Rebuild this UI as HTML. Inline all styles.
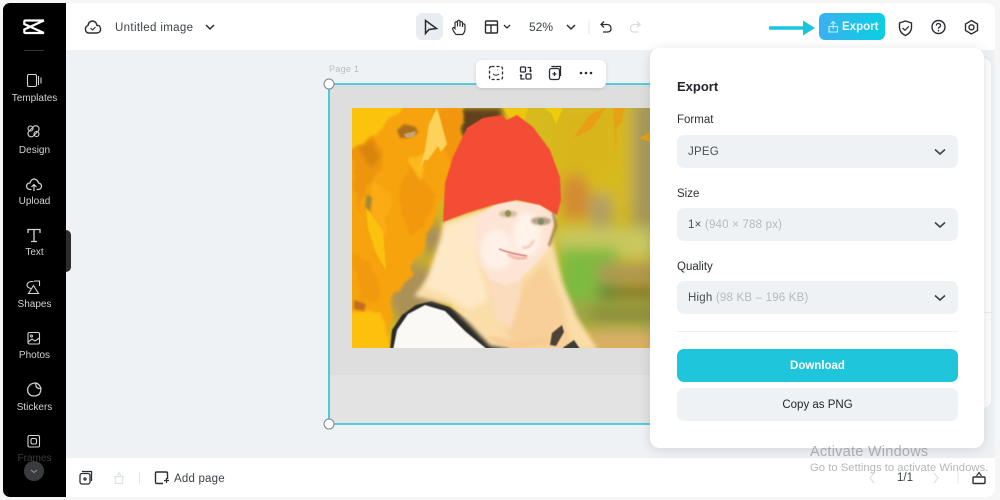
<!DOCTYPE html>
<html><head><meta charset="utf-8"><style>
*{box-sizing:border-box;margin:0;padding:0}
html,body{width:1000px;height:500px;overflow:hidden;background:#f6f6f6;font-family:"Liberation Sans",sans-serif}
.a{position:absolute}
svg{position:absolute;overflow:visible}
.t{position:absolute;white-space:nowrap}
.nav{position:absolute;left:3px;width:63px;text-align:center;color:#d2d2d2;font-size:10px}
.lb{position:absolute;left:677px;font-size:11.5px;color:#2b2f36}
.sel{position:absolute;left:677px;width:281px;height:33px;background:#eff2f5;border-radius:7px;font-size:11.5px;line-height:35px;padding-left:11px;color:#4a4f57;letter-spacing:.2px}
.sel i{font-style:normal;color:#b4b9c0}
.sel svg{left:257px;top:13px}
</style></head><body>

<div class="a" style="left:66px;top:3px;width:929px;height:494px;background:#eff2f5;border-radius:0 8px 8px 0"></div>
<div class="a" style="left:66px;top:3px;width:929px;height:47px;background:#fff;border-radius:0 8px 0 0"></div>
<div class="a" style="left:66px;top:458px;width:929px;height:39px;background:#fff;border-radius:0 0 8px 0"></div>

<!-- page -->
<div class="t" style="left:329px;top:64px;font-size:9px;color:#b9bdc3;letter-spacing:.3px">Page 1</div>
<svg class="a" style="left:0;top:0" width="1000" height="500" viewBox="0 0 1000 500">
<defs>
<filter id="b3" x="-30%" y="-30%" width="160%" height="160%"><feGaussianBlur stdDeviation="3"/></filter>
<filter id="b2" x="-30%" y="-30%" width="160%" height="160%"><feGaussianBlur stdDeviation="2"/></filter>
<filter id="b7" x="-30%" y="-30%" width="160%" height="160%"><feGaussianBlur stdDeviation="7"/></filter>
<filter id="b1" x="-30%" y="-30%" width="160%" height="160%"><feGaussianBlur stdDeviation="1"/></filter>
<filter id="b05" x="-30%" y="-30%" width="160%" height="160%"><feGaussianBlur stdDeviation=".6"/></filter>
<filter id="leaf" x="-10%" y="-10%" width="120%" height="120%"><feTurbulence type="fractalNoise" baseFrequency=".07" numOctaves="3" seed="4"/><feDisplacementMap in="SourceGraphic" scale="11"/><feGaussianBlur stdDeviation="1.200"/></filter>
<clipPath id="ph"><rect x="352" y="108" width="300" height="240"/></clipPath>
</defs>
<rect x="329" y="84" width="325" height="340" fill="#e3e3e3"/>
<rect x="330" y="85" width="324" height="290" fill="#dedede"/>
<g clip-path="url(#ph)">
<rect x="352" y="108" width="300" height="240" fill="#d3b71f"/>
<g filter="url(#b7)">
<rect x="505" y="100" width="155" height="110" fill="#d7ba1c"/>
<rect x="556" y="108" width="60" height="60" fill="#d9b51f"/>
<rect x="632" y="100" width="25" height="130" fill="#a79a5c"/>
<ellipse cx="575" cy="197" rx="15" ry="24" fill="#d28a30"/>
<rect x="590" y="195" width="22" height="45" fill="#ae9f66"/>
<rect x="555" y="228" width="105" height="30" fill="#c9c860"/>
<rect x="558" y="248" width="60" height="55" fill="#7dbb41"/>
<rect x="558" y="300" width="100" height="30" fill="#9fa845"/>
<rect x="598" y="263" width="60" height="20" fill="#ae9652"/>
<rect x="598" y="288" width="60" height="9" fill="#5a5125"/>
<rect x="590" y="310" width="70" height="8" fill="#7c7033"/>
<rect x="585" y="332" width="75" height="20" fill="#dcae6e"/>
<ellipse cx="415" cy="295" rx="28" ry="32" fill="#ab9059"/>
<ellipse cx="432" cy="238" rx="12" ry="18" fill="#a58b5d"/>
</g>
<rect x="460" y="108" width="42" height="30" fill="#5f431b" filter="url(#b3)"/>
<g filter="url(#leaf)">
<path d="M345 100H462L463 160L445 190L435 222L418 252L408 282L392 300L388 322L392 355H345Z" fill="#f7a307"/>
<path d="M345 100H412L378 130L358 150L345 165Z" fill="#fcc30f"/>
<path d="M345 312L380 312L394 355H345Z" fill="#fdc00e"/>
<path d="M352 152L372 135L382 150L381 172L366 187L358 212Z" fill="#ee950c"/>
<path d="M398 190L412 165L436 195L426 222L410 238L402 215Z" fill="#f1980a"/>
<path d="M432 108H462V170L448 160Z" fill="#f29610"/>
<path d="M352 252L370 262L380 295L362 305Z" fill="#f29a0c"/>
<path d="M372 180L392 195L385 240L372 226Z" fill="#fbab12"/>
<path d="M408 160L428 150L420 180Z" fill="#fcb81b"/>
</g>
<path d="M419 172L425 150L429 124L437 108L440 118L447 144L441 152L438 146L428 160L424 160Z" fill="#fcd25a" filter="url(#b05)"/>
<path d="M366 207L383 231L386 270L376 253L368 228Z" fill="#fbc20f" filter="url(#b05)"/>
<path d="M397 130L404 124L416 127L418 133L408 138L400 138Z" fill="#ad6e1e" filter="url(#b1)"/>
<path d="M404 134L416 131L414 137L406 138Z" fill="#c7a574" filter="url(#b05)"/>
<path d="M358 148L372 140L380 158L371 168Z" fill="#d98410" filter="url(#b2)"/>
<path d="M367 194L372 198L370 212L365 206Z" fill="#a08a30" filter="url(#b1)"/>
<path d="M354 300L366 304L364 311L354 309Z" fill="#c06e1a" filter="url(#b1)"/>
<path d="M503 108H528L524 122L518 126L510 118Z" fill="#efc50f" filter="url(#b05)"/>
<path d="M544 108H563L556 124L552 114Z" fill="#efcb0e" filter="url(#b05)"/>
<path d="M573 138L590 115L604 108H606L596 122L590 130Z" fill="#e89e13" filter="url(#b05)"/>
<path d="M613 108H625L622 122L617 128L616 152Z" fill="#e6a212" filter="url(#b05)"/>
<path d="M640 138L650 132V142Z" fill="#e9a114"/>
<!-- shirt -->
<path d="M391 350L394 330L405 313L425 304L445 307L470 325L494 350Z" fill="#fbf9f5"/>
<path d="M390 350L392 330L402 315L416 305L432 301L450 307L470 320L492 336L514 350H488L466 332L445 311L425 305L408 314L397 330L393 350Z" fill="#2c2925" filter="url(#b05)"/>
<!-- hair -->
<path d="M443 222L500 204L553 220L553 243L563 283L577 317L598 350H518L490 346L470 325L450 305L414 296L430 275L442 240Z" fill="#fadda8" filter="url(#b2)"/>
<path d="M445 226L482 212L478 260L488 300L470 310L445 295L425 288Z" fill="#fee9c6" filter="url(#b3)"/>
<path d="M522 285L545 262L562 302L572 348H512L505 325Z" fill="#f8cf98" filter="url(#b3)"/>
<path d="M490 338L515 346L548 340" stroke="#f5c88e" stroke-width="5" fill="none" filter="url(#b2)"/>
<path d="M552 333L562 325L564 332L556 346L550 345Z" fill="#4b4238" filter="url(#b05)"/>
<path d="M564 347L574 340L580 349H562Z" fill="#3c3a33" filter="url(#b05)"/>
<!-- neck & face -->
<path d="M487 272H522L520 300L510 330L495 318L490 295Z" fill="#fbdcbc" filter="url(#b2)"/>
<path d="M478 215L505 199L540 204L556 215L552 232L548 250L532 268L518 281L505 285L490 280L480 265L476 240Z" fill="#fde4d4" filter="url(#b1)"/>
<ellipse cx="527" cy="235" rx="14" ry="22" fill="#fff3ea" filter="url(#b3)"/>
<ellipse cx="497" cy="250" rx="16" ry="20" fill="#fff1e8" filter="url(#b3)"/>
<path d="M534 240Q529 250 522 247" stroke="#eec0a8" stroke-width="2" fill="none" filter="url(#b1)"/>
<ellipse cx="508" cy="214" rx="9" ry="3.500" fill="#d5bda2" filter="url(#b1)"/>
<ellipse cx="541" cy="221" rx="10" ry="4" fill="#b8a285" filter="url(#b1)"/>
<circle cx="508" cy="213.500" r="3.200" fill="#8e9250" filter="url(#b05)"/>
<circle cx="541" cy="221.500" r="3.200" fill="#7f8c68" filter="url(#b05)"/>
<path d="M499 249Q512 254 527 256" stroke="#c85d55" stroke-width="1.200" fill="none" filter="url(#b05)"/>
<path d="M508 254Q518 261 527 257" stroke="#f2b0a4" stroke-width="2.800" fill="none" filter="url(#b1)"/>
<path d="M553 212L556 226L549 246" stroke="#a1814f" stroke-width="2.500" fill="none" filter="url(#b1)"/>
<!-- hat -->
<path d="M443 222L445 183L453 157L467 128L483 118L502 115L507 120L517 115L533 127L550 150L560 177L561 200L557 215L540 205L517 200L493 205L467 213Z" fill="#f34e35" filter="url(#b05)"/>
</g>
<!-- selection -->
<path d="M329 84H654M329 84V424M329 424H654" stroke="#22c4d4" stroke-width="1.600" fill="none"/>
<circle cx="329" cy="84" r="5" fill="#fff" stroke="#7e8590" stroke-width="1"/>
<circle cx="329" cy="424" r="5" fill="#fff" stroke="#7e8590" stroke-width="1"/>
</svg>

<!-- floating toolbar -->
<div class="a" style="left:476px;top:60px;width:130px;height:28px;background:#fff;border-radius:6px;box-shadow:0 1px 4px rgba(0,0,0,.12)"></div>
<svg style="left:0;top:0" width="1000" height="500" fill="none" stroke="#2a2d33" stroke-width="1.300">
<rect x="489.500" y="66.500" width="13" height="13" rx="2" stroke-dasharray="3 2"/>
<path d="M493 74Q496 76.500 499 74M497 70H497.500" stroke-width="1"/>
<rect x="520.500" y="67" width="5" height="5" rx="1"/><rect x="526" y="74" width="5" height="5" rx="1"/>
<path d="M527.500 67.500H530.500V71.500M529.500 70.500L530.500 71.500L531.500 70.500M524.500 79H521V75M520 76L521 75L522 76"/>
<rect x="549.500" y="68.500" width="10" height="11" rx="2"/><path d="M552 67V66.500H560.500V76M552.500 74H556.500M554.500 72V76"/>
<circle cx="581" cy="73" r="1.300" fill="#2a2d33" stroke="none"/><circle cx="586" cy="73" r="1.300" fill="#2a2d33" stroke="none"/><circle cx="591" cy="73" r="1.300" fill="#2a2d33" stroke="none"/>
</svg>

<!-- second panel behind -->
<div class="a" style="left:975px;top:58px;width:16px;height:350px;background:#fff;border-radius:0 8px 8px 0;box-shadow:0 0 3px rgba(0,0,0,.06)"></div>
<div class="a" style="left:984px;top:312px;width:7px;height:1px;background:#eceef0"></div>

<!-- panel -->
<div class="a" style="left:650px;top:48px;width:334px;height:400px;background:#fff;border-radius:10px;box-shadow:0 2px 12px rgba(30,40,60,.14)"></div>
<div class="t" style="left:677px;top:79px;font-size:13px;font-weight:bold;color:#23262b">Export</div>
<div class="lb" style="top:114px">Format</div>
<div class="sel" style="top:135px">JPEG<svg width="12" height="8" fill="none" stroke="#41464e" stroke-width="1.700"><path d="M1 1.500L6 6L11 1.500"/></svg></div>
<div class="lb" style="top:188px">Size</div>
<div class="sel" style="top:208px">1× <i>(940 × 788 px)</i><svg width="12" height="8" fill="none" stroke="#41464e" stroke-width="1.700"><path d="M1 1.500L6 6L11 1.500"/></svg></div>
<div class="lb" style="top:261px">Quality</div>
<div class="sel" style="top:281px">High <i>(98 KB – 196 KB)</i><svg width="12" height="8" fill="none" stroke="#41464e" stroke-width="1.700"><path d="M1 1.500L6 6L11 1.500"/></svg></div>
<div class="a" style="left:677px;top:331px;width:281px;height:1px;background:#eceef0"></div>
<div class="a" style="left:677px;top:349px;width:281px;height:33px;background:#1fc5da;border-radius:7px;color:#fff;font-size:11.5px;font-weight:bold;text-align:center;line-height:33px;padding-top:1px">Download</div>
<div class="a" style="left:677px;top:388px;width:281px;height:33px;background:#eff2f5;border-radius:7px;color:#23262b;font-size:11.5px;text-align:center;line-height:33px;padding-top:1px">Copy as PNG</div>

<!-- sidebar -->
<div class="a" style="left:3px;top:3px;width:63px;height:494px;background:#000;border-radius:7px 0 0 7px"></div>
<div class="a" style="left:66px;top:230px;width:5px;height:42px;background:#2c2c2e;border-radius:0 6px 6px 0"></div>
<svg style="left:0;top:0" width="80" height="500" fill="none" stroke="#d4d4d4" stroke-width="1.100">
<path d="M44 20.500H25.500Q24.300 20.500 24.300 21.800V24L44 33M44 20.500L24.300 29.500V31.800Q24.300 33 25.500 33H44" stroke="#fff" stroke-width="2.200"/>
<path d="M24 50.500H44" stroke="#333"/>
<rect x="27.500" y="74.500" width="9" height="12" rx="1.500"/><path d="M38.500 76V85M41 77.500V83.500"/>
<g stroke-width="1.100"><rect x="27" y="128" width="13" height="6.500" rx="3.250" transform="rotate(-45 33.500 131.250)"/><circle cx="30.500" cy="128.500" r="2.500"/><circle cx="36.500" cy="134" r="2.500"/></g>
<path d="M29.500 189.500Q26.500 188.500 26.500 186Q27 183 30 183Q31 179 34.500 179Q38 180 38.500 183Q41.500 183.500 41.500 186.500Q41 189 38.500 189.500H36.500M31.500 189.500H29.500M34 191V184.500M31.500 187L34 184.500L36.500 187" stroke-width="1.200"/>
<path d="M28 233V229.500H40V233M34 229.500V241.500M31 241.500H37" stroke-width="1.300"/>
<path d="M31 288.500Q27 287.500 27 285Q27.500 282 31 281.500H33.500M34 281H39.500V286M33.500 285.500L38.500 293.500H28.500Z"/>
<rect x="28" y="332.500" width="11.500" height="11.500" rx="1.500"/><circle cx="31.500" cy="336" r="1"/><path d="M28 342L32 339L35 341L39.500 338"/>
<path d="M36 383Q30 383 28 387.500Q26.500 393 31 395.500Q36 397 39.500 394Q41 391.500 41 388.500Q37 389 36 386Q35.500 384.500 36 383ZM36 383Q39.500 384 41 388.500" stroke-width="1.200"/>
<rect x="28" y="435.500" width="11.500" height="11.500" rx="1.500"/><rect x="31" y="438.500" width="5.500" height="5.500" rx="1.500"/>
</svg>
<div class="nav" style="top:93px">Templates</div>
<div class="nav" style="top:145px">Design</div>
<div class="nav" style="top:196px">Upload</div>
<div class="nav" style="top:247px">Text</div>
<div class="nav" style="top:299px">Shapes</div>
<div class="nav" style="top:350px">Photos</div>
<div class="nav" style="top:402px">Stickers</div>
<div class="nav" style="top:453px;color:#3c3c3c">Frames</div>
<div class="a" style="left:24px;top:461px;width:20px;height:20px;border-radius:50%;background:#3a3b3f"></div>
<svg style="left:30px;top:469px" width="8" height="5" fill="none" stroke="#9a9a9a" stroke-width="1"><path d="M1 1L4 3.500L7 1"/></svg>

<!-- top bar -->
<svg style="left:0;top:0" width="1000" height="60" fill="none" stroke="#2a2d33" stroke-width="1.400">
<path d="M89 33H97Q101 32.500 100.500 28.500Q100 25 97 25.500Q96 21 92.500 21Q88.500 21.500 88 25.500Q85 26.500 85.500 30Q86 33 89 33Z"/><path d="M90.500 28L92.500 30L95.500 27" stroke-width="1.100"/>
<path d="M206 25L210 29L214 25" stroke-width="1.500"/>
<rect x="416" y="13" width="27" height="27" rx="6" fill="#e8edf1" stroke="none"/>
<path d="M425.500 20.500V33.500L429 29.500L436.500 28.500Z" stroke-width="1.500"/>
<path d="M456 34.500Q453 31 452.500 28.500Q453.500 26.500 455 28.500V22.500Q456.500 21 457.500 22.500V21Q459 19.500 460 21V22Q461.500 21 462.500 22.500V24Q464.500 23.500 465 25V29.500Q464.500 33 462.500 34.500H456ZM457.500 22.500V26.500M460 21.500V26.500M462.500 23V27" stroke-width="1.200"/>
<rect x="485.500" y="21" width="12" height="12" rx="1"/><path d="M485.500 25H497.500M491 25V33"/>
<path d="M504 25L507 28L510 25" stroke-width="1.300"/>
<path d="M567 25L571 29L575 25" stroke-width="1.500"/>
<path d="M589 20.500V34" stroke="#e3e6e9" stroke-width="1"/>
<path d="M604 21.500L601 24.500L604 27.500M601.500 24.500H607.500Q611 25 611 28.500Q611 32 607.500 32H603" stroke-width="1.300"/>
<path d="M637 21.500L640 24.500L637 27.500M639.500 24.500H634Q630.500 25 630.500 28.500Q630.500 32 634 32H638" stroke="#d8dce0" stroke-width="1.300"/>
<path d="M905.500 21L911.500 23V28Q911 33 905.500 35.500Q900 33 899.500 28V23Z" stroke-width="1.400"/><path d="M902.500 28L905 30.300L908.800 26.300" stroke-width="1.200"/>
<circle cx="938.500" cy="27" r="6.500"/><path d="M936.300 25.500Q936.500 23.500 938.500 23.500Q940.800 23.800 940.600 25.800Q940 27 938.500 28V28.800" stroke-width="1.300"/><circle cx="938.500" cy="30.700" r=".8" fill="#2a2d33" stroke="none"/>
<path d="M971.500 20.500L977.500 24V30.500L971.500 34L965.500 30.500V24Z"/><circle cx="971.500" cy="27.300" r="2.500"/>
<path d="M769 28H803" stroke="#19c6dc" stroke-width="3.500"/><path d="M803 20.500L815 28L803 35.500Z" fill="#19c6dc" stroke="none"/>
</svg>
<div class="t" style="left:115px;top:22px;font-size:11.5px;color:#3d4148;letter-spacing:.35px">Untitled image</div>
<div class="t" style="left:529px;top:20px;font-size:12px;color:#3d4148">52%</div>
<div class="a" style="left:819px;top:13px;width:66px;height:27px;border-radius:6px;background:linear-gradient(90deg,#3cb0f0,#0acfe2)"></div>
<svg style="left:826px;top:20px" width="14" height="14" fill="none" stroke="#cfeefa" stroke-width="1.100"><path d="M3 6.500H11.500V12H3ZM7.200 9V2M5 3.800L7.200 1.500L9.400 3.800"/></svg>
<div class="t" style="left:842px;top:21px;font-size:11.500px;font-weight:bold;color:#eafaff">Export</div>

<!-- bottom bar -->
<svg style="left:0;top:0" width="1000" height="500" fill="none" stroke="#2a2d33" stroke-width="1.300">
<rect x="80" y="473.500" width="10" height="10.500" rx="2"/><path d="M82.500 472V471.500H91.500V481M83 479H87M85 477V481"/>
<path d="M114 476.500H124M115.500 476.500V483.500H122.500V476.500M117 476.500L119 472.500L121 476.500" stroke="#dfe3e7"/>
<path d="M139.500 471.500V483.500" stroke="#e3e6e9" stroke-width="1"/>
<path d="M163 483.500H157Q155.500 483.500 155.500 482V473Q155.500 472 157 472H166Q167.500 472 167.500 473V479" stroke-width="1.400"/><path d="M164 480.500H169M166.500 478V483" stroke-width="1.200"/>
<path d="M874 473L870 478L874 483M934 473L938 478L934 483" stroke="#dcdfe3" stroke-width="1.100"/>
<path d="M958 471V484" stroke="#e3e6e9" stroke-width="1"/>
<rect x="973" y="477" width="12" height="6.500" rx="1" stroke-width="1.400"/><path d="M976.500 476L979 472.500L981.500 476" stroke-width="1.100"/>
</svg>
<div class="t" style="left:174px;top:473px;font-size:11.5px;color:#3d4148;letter-spacing:.2px">Add page</div>
<div class="t" style="left:897px;top:472px;font-size:11.5px;color:#3d4148">1/1</div>

<!-- watermark -->
<div class="t" style="left:810px;top:444px;font-size:14.5px;color:rgba(120,120,120,.55);letter-spacing:.25px">Activate Windows</div>
<div class="t" style="left:810px;top:462px;font-size:11.3px;color:rgba(120,120,120,.55)">Go to Settings to activate Windows.</div>
</body></html>
